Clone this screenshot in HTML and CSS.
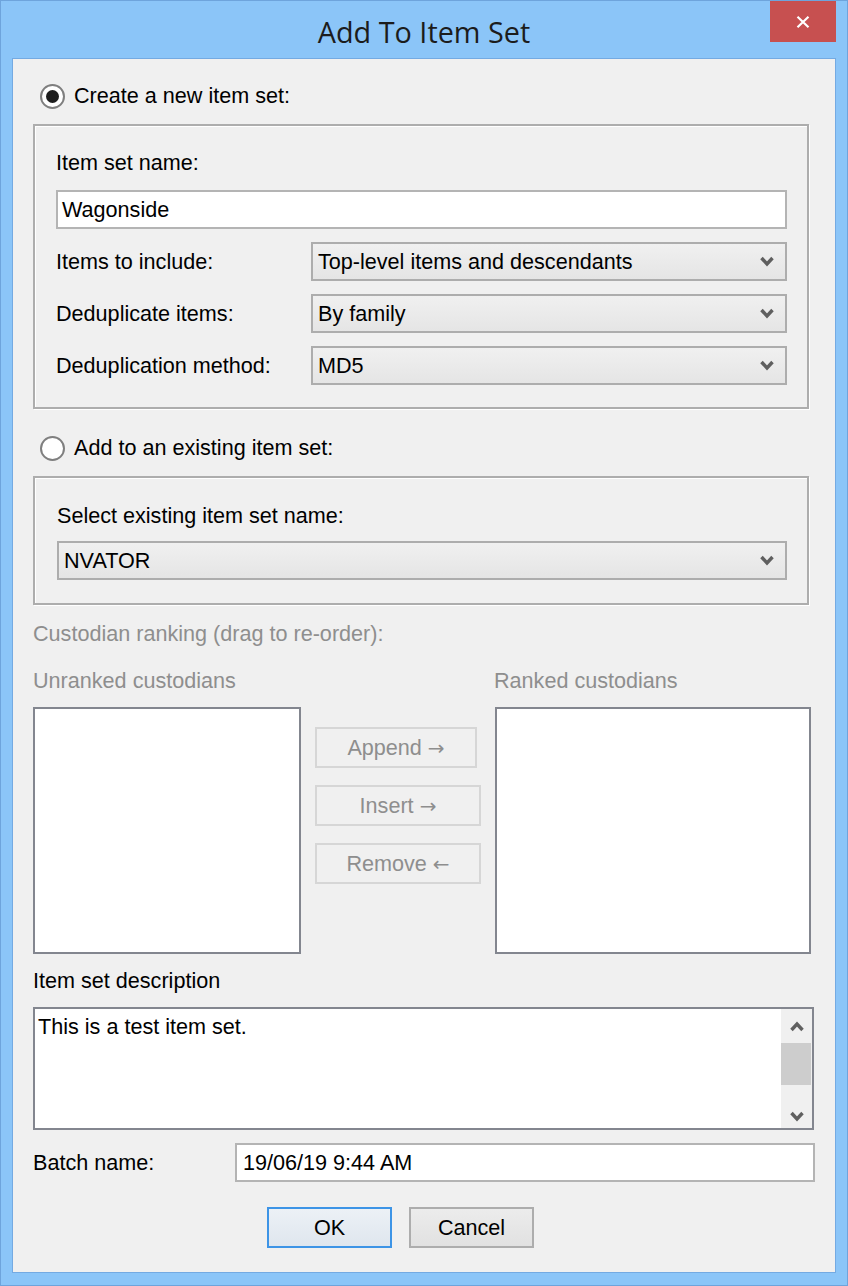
FILE: index.html
```html
<!DOCTYPE html>
<html>
<head>
<meta charset="utf-8">
<link rel="stylesheet" href="styles.css">
</head>
<body>
<div class="window">
  <div class="titlebar">
    <div class="title">Add To Item Set</div>
    <div class="close">
      <svg width="14" height="12" viewBox="0 0 14 12"><path d="M1.5 0.8 L12.5 11.2 M12.5 0.8 L1.5 11.2" stroke="#fff" stroke-width="2.2" fill="none"/></svg>
    </div>
  </div>
  <div class="client">
    <div class="radio-row r1"><span class="radio checked"></span><span class="rlabel">Create a new item set:</span></div>
    <div class="group g1">
      <div class="lbl">Item set name:</div>
      <div class="textbox name">Wagonside</div>
      <div class="rows">
        <div class="row">
          <div class="rowlbl">Items to include:</div>
          <div class="combo wide"><span>Top-level items and descendants</span><svg class="chev" width="14" height="11" viewBox="0 0 14 11"><path d="M1.5 2 L7 8 L12.5 2" stroke="#5f5f5f" stroke-width="3.4" fill="none"/></svg></div>
        </div>
        <div class="row">
          <div class="rowlbl">Deduplicate items:</div>
          <div class="combo wide"><span>By family</span><svg class="chev" width="14" height="11" viewBox="0 0 14 11"><path d="M1.5 2 L7 8 L12.5 2" stroke="#5f5f5f" stroke-width="3.4" fill="none"/></svg></div>
        </div>
        <div class="row">
          <div class="rowlbl">Deduplication method:</div>
          <div class="combo wide"><span>MD5</span><svg class="chev" width="14" height="11" viewBox="0 0 14 11"><path d="M1.5 2 L7 8 L12.5 2" stroke="#5f5f5f" stroke-width="3.4" fill="none"/></svg></div>
        </div>
      </div>
    </div>
    <div class="radio-row r2"><span class="radio"></span><span class="rlabel">Add to an existing item set:</span></div>
    <div class="group g2">
      <div class="lbl">Select existing item set name:</div>
      <div class="combo full"><span>NVATOR</span><svg class="chev" width="14" height="11" viewBox="0 0 14 11"><path d="M1.5 2 L7 8 L12.5 2" stroke="#5f5f5f" stroke-width="3.4" fill="none"/></svg></div>
    </div>
    <div class="lbl disabled cust">Custodian ranking (drag to re-order):</div>
    <div class="ranking">
      <div class="col left">
        <div class="lbl disabled">Unranked custodians</div>
        <div class="listbox lb-left"></div>
      </div>
      <div class="mid">
        <div class="dbtn b-append">Append <span class="arr">→</span></div>
        <div class="dbtn b-insert">Insert <span class="arr">→</span></div>
        <div class="dbtn b-remove">Remove <span class="arr">←</span></div>
      </div>
      <div class="col right">
        <div class="lbl disabled">Ranked custodians</div>
        <div class="listbox lb-right"></div>
      </div>
    </div>
    <div class="lbl desc-lbl">Item set description</div>
    <div class="textarea">
      <div class="ta-text">This is a test item set.</div>
      <div class="scrollbar">
        <svg class="sarrow" width="14" height="11" viewBox="0 0 14 11"><path d="M1.5 9 L7 3 L12.5 9" stroke="#606060" stroke-width="3.4" fill="none"/></svg>
        <div class="strack"><div class="thumb"></div></div>
        <svg class="sarrow" width="14" height="11" viewBox="0 0 14 11"><path d="M1.5 2 L7 8 L12.5 2" stroke="#606060" stroke-width="3.4" fill="none"/></svg>
      </div>
    </div>
    <div class="batch">
      <div class="batch-lbl">Batch name:</div>
      <div class="textbox batch-input">19/06/19 9:44 AM</div>
    </div>
    <div class="buttons">
      <div class="btn ok">OK</div>
      <div class="btn cancel">Cancel</div>
    </div>
  </div>
</div>
</body>
</html>
```

FILE: styles.css
```css
* { box-sizing: border-box; }
html, body { margin: 0; padding: 0; }
body {
  width: 848px;
  height: 1286px;
  font-family: "Liberation Sans", Arial, sans-serif;
  font-size: 21.6px;
  color: #000;
}
.window {
  width: 848px;
  height: 1286px;
  background: #8bc5f8;
  border: 1px solid #6ea4dc;
  display: flex;
  flex-direction: column;
}
.titlebar {
  position: relative;
  height: 57px;
  flex: none;
}
.title {
  text-align: center;
  font-family: "Open Sans", "Noto Sans", sans-serif;
  font-size: 28.8px;
  line-height: 28px;
  padding-top: 17px;
  color: #1c1c1c;
}
.close {
  position: absolute;
  left: 769px;
  top: 0;
  width: 66px;
  height: 41px;
  background: #c75050;
  display: flex;
  align-items: center;
  justify-content: center;
}
.client {
  margin: 0 11px 12px 11px;
  height: 1215px;
  background: #f0f0f0;
  border: 1px solid #74aae2;
  padding: 0 0 0 20px;
  display: flex;
  flex-direction: column;
}
.radio-row {
  display: flex;
  align-items: center;
  height: 28px;
}
.r1 { margin-top: 23px; }
.r2 { margin-top: 25px; }
.radio {
  width: 25px;
  height: 25px;
  border-radius: 50%;
  border: 2px solid #7f7f7f;
  background: #fff;
  margin-left: 7px;
  margin-right: 9px;
  display: flex;
  align-items: center;
  justify-content: center;
}
.radio.checked::after {
  content: "";
  width: 13px;
  height: 13px;
  border-radius: 50%;
  background: #1e1e1e;
}
.rlabel { line-height: 28px; }
.group {
  width: 776px;
  border: 2px solid #adadad;
  box-shadow: inset 1px 1px 0 #fff, 1px 1px 0 #fff;
  margin-top: 14px;
  display: flex;
  flex-direction: column;
}
.g1 { height: 285px; padding: 24px 20px 0 21px; }
.g2 { height: 129px; padding: 25px 20px 0 22px; }
.lbl {
  height: 26px;
  line-height: 26px;
  white-space: nowrap;
}
.textbox {
  height: 39px;
  background: #fff;
  border: 2px solid #b4b4b4;
  line-height: 35px;
  padding-left: 4px;
  white-space: nowrap;
}
.name { margin-top: 14px; }
.rows {
  display: flex;
  flex-direction: column;
  gap: 13px;
  margin-top: 13px;
}
.row {
  display: flex;
  align-items: center;
}
.rowlbl {
  width: 255px;
  line-height: 26px;
}
.combo {
  height: 39px;
  border: 2px solid #adadad;
  background: linear-gradient(#f0f0f0, #e5e5e5);
  display: flex;
  align-items: center;
  justify-content: space-between;
  padding: 0 11px 0 5px;
}
.combo.wide { width: 476px; }
.combo.full { width: 730px; margin-top: 12px; }
.disabled { color: #8e8e8e; }
.cust { margin-top: 16px; }
.ranking {
  display: flex;
  margin-top: 21px;
}
.col { display: flex; flex-direction: column; }
.listbox {
  margin-top: 13px;
  height: 247px;
  background: #fff;
  border: 2px solid #83868f;
}
.lb-left { width: 268px; }
.lb-right { width: 316px; }
.right { margin-left: 15px; }
.right .lbl { margin-left: -1px; }
.mid {
  width: 179px;
  padding-left: 14px;
  padding-top: 59px;
  display: flex;
  flex-direction: column;
}
.dbtn {
  height: 41px;
  border: 2px solid #d6d6d6;
  color: #8e8e8e;
  text-align: center;
  line-height: 37px;
  white-space: nowrap;
}
.arr {
  font-family: "DejaVu Sans", sans-serif;
  font-size: 20px;
}
.b-append { width: 162px; }
.b-insert { width: 166px; margin-top: 17px; }
.b-remove { width: 166px; margin-top: 17px; }
.desc-lbl { margin-top: 14px; }
.textarea {
  margin-top: 13px;
  width: 781px;
  height: 123px;
  background: #fff;
  border: 2px solid #83868f;
  display: flex;
  justify-content: space-between;
}
.ta-text {
  padding: 5px 0 0 3px;
  line-height: 26px;
}
.scrollbar {
  width: 31px;
  background: #f0f0f0;
  display: flex;
  flex-direction: column;
  align-items: center;
  padding: 12px 0 6px 0;
}
.strack {
  flex: 1;
  width: 100%;
  padding-top: 11px;
}
.thumb {
  width: 30px;
  height: 42px;
  background: #cdcdcd;
}
.batch {
  display: flex;
  align-items: center;
  margin-top: 13px;
}
.batch-lbl {
  width: 202px;
  line-height: 26px;
}
.batch-input {
  width: 580px;
  padding-left: 6px;
}
.buttons {
  display: flex;
  margin-top: 25px;
  padding-left: 234px;
  gap: 17px;
}
.btn {
  width: 125px;
  height: 41px;
  text-align: center;
  line-height: 37px;
}
.ok {
  border: 2px solid #3d94e6;
  background: linear-gradient(#ecf1f6, #dfe6ee);
}
.cancel {
  border: 2px solid #adadad;
  background: linear-gradient(#ececec, #e1e1e1);
}
```
